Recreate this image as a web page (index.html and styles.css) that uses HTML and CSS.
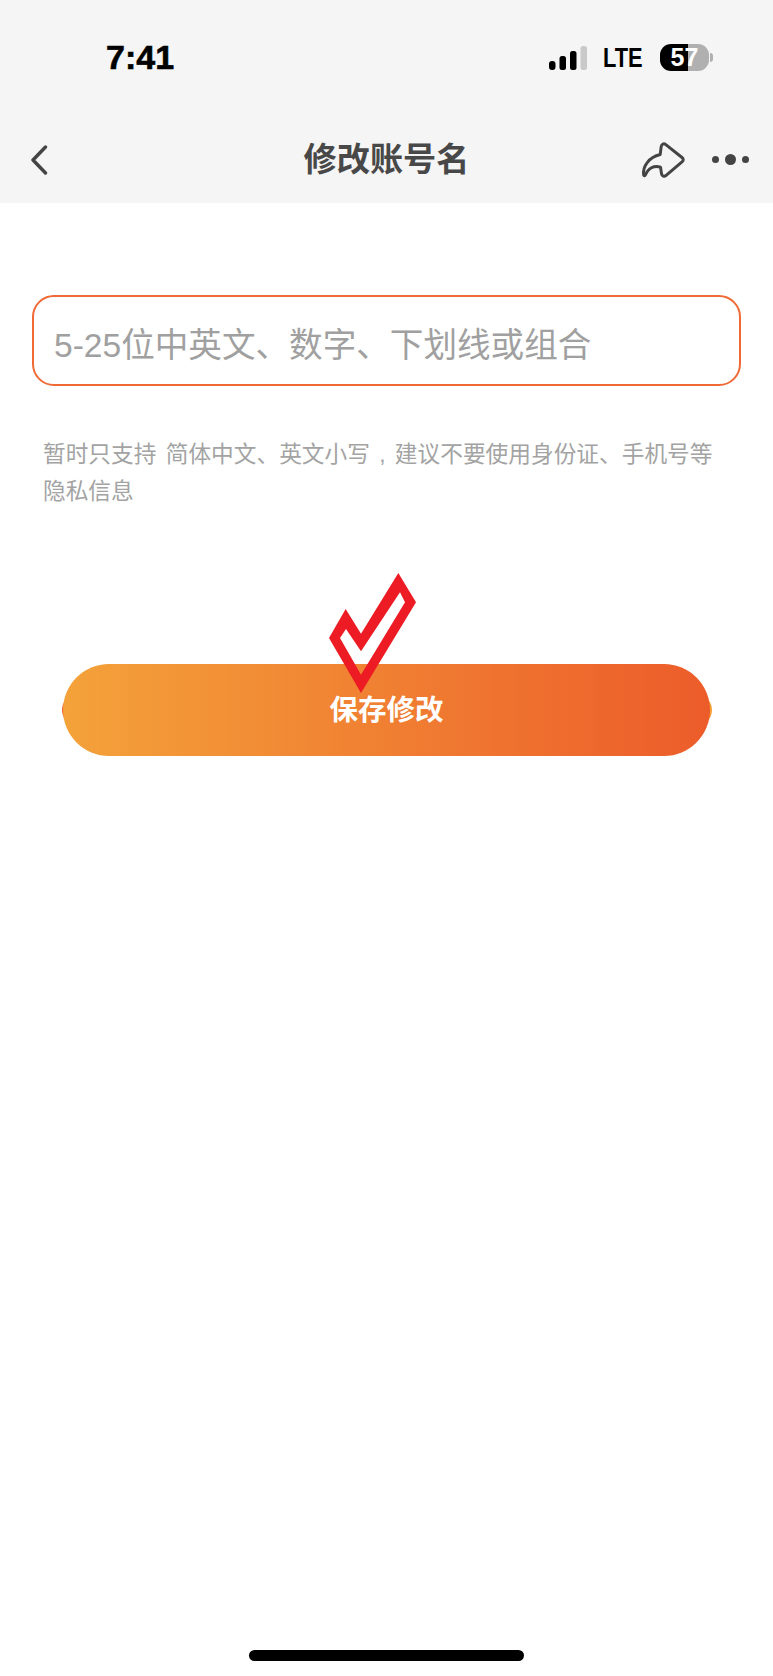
FILE: index.html
```html
<!DOCTYPE html>
<html lang="zh-CN">
<head>
<meta charset="utf-8">
<title>修改账号名</title>
<link rel="stylesheet" href="styles.css">
</head>
<body>
<div class="page">
  <header class="header">
    <div class="status">
      <span class="time">7:41</span>
      <div class="status-right">
        <svg class="signal" viewBox="0 0 38 24" width="38" height="24" aria-hidden="true">
          <rect x="0" y="15" width="6.5" height="9" rx="3" fill="#000"/>
          <rect x="10.5" y="10" width="6.5" height="14" rx="2.5" fill="#000"/>
          <rect x="21" y="5" width="6.5" height="19" rx="2.5" fill="#000"/>
          <rect x="31.5" y="0" width="6.5" height="24" rx="2.5" fill="#c9c9c9"/>
        </svg>
        <span class="lte"><span class="lte-text">LTE</span></span>
        <div class="battery-wrap">
          <div class="battery">57</div>
          <span class="battery-cap"></span>
        </div>
      </div>
    </div>
    <nav class="nav">
      <div class="nav-left">
        <svg class="back" viewBox="0 0 18 30" width="18" height="30" aria-hidden="true">
          <path d="M15.5 2 L3 15 L15.5 28" fill="none" stroke="#444" stroke-width="3.4" stroke-linecap="round" stroke-linejoin="round"/>
        </svg>
      </div>
      <h1 class="title">修改账号名</h1>
      <div class="nav-right">
        <svg class="share" viewBox="60 45 140 115" width="47" height="38" aria-hidden="true">
          <path d="M70 148 C66 122 86 94 120 86 L123 62 C124 54 131 51 137 56 L186 95 C191 99 191 104 186 108 L138 149 C132 154 125 151 124 144 L121 124 C100 118 84 128 76 146 C74 151 71 151 70 148 Z" fill="none" stroke="#444" stroke-width="9" stroke-linejoin="round"/>
        </svg>
        <div class="dots">
          <span class="dot"></span>
          <span class="dot dot-big"></span>
          <span class="dot"></span>
        </div>
      </div>
    </nav>
  </header>
  <main class="main">
    <input class="name-input" type="text" placeholder="5-25位中英文、数字、下划线或组合">
    <p class="hint">暂时只支持 简体中文、英文小写 , 建议不要使用身份证、手机号等隐私信息</p>
    <div class="save">
      <button class="save-btn" type="button">保存修改</button>
      <svg class="check" viewBox="117 40 261 360" width="87" height="120" aria-hidden="true">
        <path fill="#ed1c24" fill-rule="evenodd" d="M325 40 L378 128 L213 400 L117 235 L167 148 L213 222 Z M330 98 L213 275 L168 208 L150 235 L213 345 L345 128 Z"/>
      </svg>
    </div>
  </main>
  <div class="home"></div>
</div>
</body>
</html>
```
FILE: styles.css
```css
* {
  box-sizing: border-box;
}

html,
body {
  margin: 0;
  padding: 0;
  background: #fff;
}

.page {
  width: 773px;
  height: 1676px;
  display: flex;
  flex-direction: column;
  overflow: hidden;
  font-family: "Liberation Sans", "Noto Sans CJK SC", sans-serif;
}

.header {
  height: 203px;
  padding-top: 44px;
  background: #f5f5f5;
}

.status {
  height: 27px;
  display: flex;
  align-items: center;
  justify-content: space-between;
  padding: 0 60px 0 106px;
}

.time {
  font-size: 34px;
  font-weight: 700;
  line-height: 27px;
  color: #000;
  -webkit-text-stroke: 0.6px #000;
}

.status-right {
  display: flex;
  align-items: center;
}

.signal {
  display: block;
  margin-top: 1px;
}

.lte {
  width: 40px;
  margin: 0 17px 0 16px;
  display: block;
}

.lte-text {
  display: inline-block;
  font-size: 28px;
  line-height: 27px;
  font-weight: 700;
  color: #000;
  transform: scaleX(0.78);
  transform-origin: left center;
}

.battery-wrap {
  display: flex;
  align-items: center;
  gap: 1px;
}

.battery {
  width: 49px;
  height: 27px;
  border-radius: 11px;
  background: linear-gradient(90deg, #000 57%, #b0b0b0 57%);
  color: #fff;
  font-size: 25px;
  font-weight: 700;
  line-height: 27px;
  text-align: center;
}

.battery-cap {
  width: 3px;
  height: 9px;
  border-radius: 0 3px 3px 0;
  background: #b0b0b0;
}

.nav {
  height: 36px;
  margin-top: 70px;
  display: grid;
  grid-template-columns: 1fr auto 1fr;
  align-items: center;
}

.nav-left {
  padding-left: 30px;
  display: flex;
}

.back {
  display: block;
}

.title {
  margin: 0;
  font-size: 33.2px;
  line-height: 36px;
  font-weight: 700;
  color: #484848;
}

.nav-right {
  display: flex;
  align-items: center;
  justify-content: flex-end;
  padding-right: 24px;
  gap: 25px;
}

.share {
  display: block;
}

.dots {
  display: flex;
  align-items: center;
  gap: 6px;
  margin-bottom: 1px;
}

.dot {
  width: 7px;
  height: 7px;
  border-radius: 50%;
  background: #444;
}

.dot-big {
  width: 11px;
  height: 11px;
}

.main {
  display: flex;
  flex-direction: column;
}

.name-input {
  display: block;
  height: 91px;
  margin: 92px 32px 0;
  padding: 10px 20px 0;
  border: 2px solid #f06a35;
  border-radius: 22px;
  background: #fff;
  outline: none;
  font-family: inherit;
  font-size: 33.6px;
  color: #333;
}

.name-input::placeholder {
  color: #a0a0a0;
  opacity: 1;
}

.hint {
  margin: 50px 50px 0 43px;
  font-size: 22.7px;
  line-height: 37px;
  word-spacing: 3px;
  color: #a3a3a3;
}

.save {
  position: relative;
  height: 92px;
  margin: 154px 61px 0 62px;
}

.save::before {
  content: "";
  position: absolute;
  inset: 30px 0;
  border-radius: 16px;
  background: linear-gradient(90deg, #ee5a28, #f4a23a);
}

.save-btn {
  position: absolute;
  inset: 0 2px 0 1px;
  width: calc(100% - 3px);
  height: 100%;
  border: 0;
  border-radius: 46px;
  background: linear-gradient(90deg, #f4a23a, #ec5c2a);
  color: #fff;
  font-family: inherit;
  font-size: 28.5px;
  font-weight: 700;
  line-height: 92px;
  padding: 0;
}

.check {
  position: absolute;
  left: 267px;
  top: -91px;
  display: block;
}

.home {
  width: 275px;
  height: 11px;
  margin: auto auto 15px;
  border-radius: 6px;
  background: #000;
}
```
